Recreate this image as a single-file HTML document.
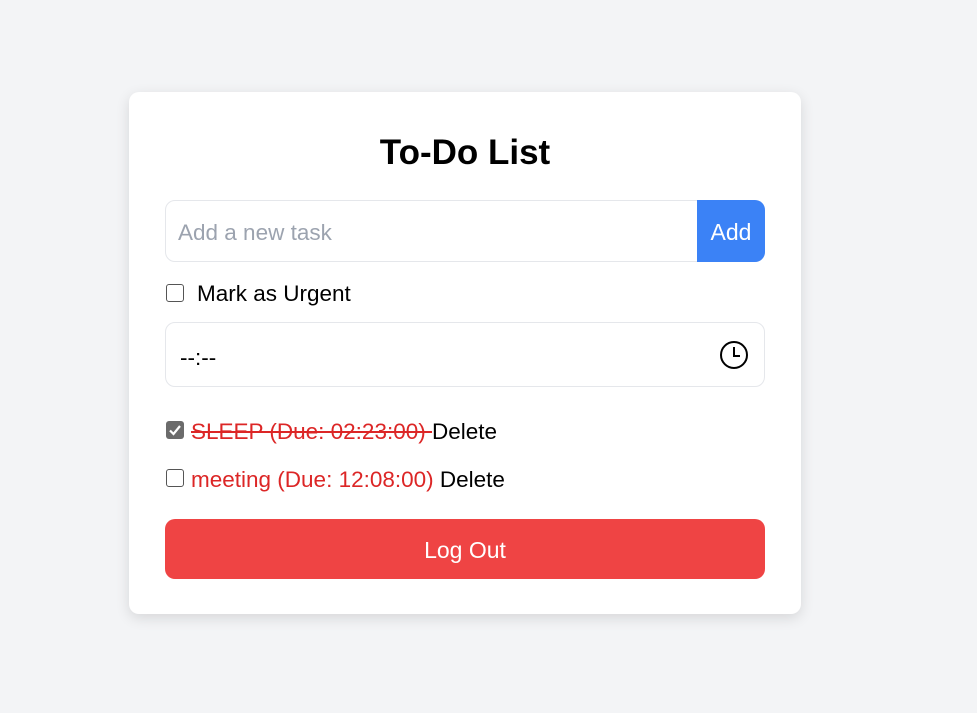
<!DOCTYPE html>
<html><head><style>
body{margin:0;background:#f3f4f6;font-family:"Liberation Sans",sans-serif;width:977px;height:713px;position:relative;overflow:hidden}
.card{position:absolute;left:129px;top:92px;width:672px;height:522px;background:#fff;border-radius:10px;box-shadow:0 4px 14px rgba(0,0,0,0.12)}
.abs{position:absolute}
h1{position:absolute;left:0;width:672px;top:41px;margin:0;text-align:center;font-size:35px;font-weight:bold;color:#000}
.inp{left:36px;top:108px;width:600px;height:62px;border:1px solid #e5e7eb;border-radius:10px;box-sizing:border-box}
.btn{left:568px;top:108px;width:68px;height:62px;background:#3b82f6;color:#fff;border-radius:0 10px 10px 0;font-size:23px;line-height:64px;text-align:center}
.cb{width:18px;height:18px;border:1.5px solid #555;border-radius:3px;box-sizing:border-box}
.txt{font-size:22.5px;color:#000;white-space:nowrap}
</style></head><body>
<div class="card">
<h1>To-Do List</h1>
<div class="abs inp"></div>
<div class="abs txt" style="left:49px;top:128px;color:#9ca3af">Add a new task</div>
<div class="abs btn">Add</div>
<div class="abs cb" style="left:37px;top:192px"></div>
<div class="abs txt" style="left:68px;top:189px">Mark as Urgent</div>
<div class="abs inp" style="top:230px;height:65px"></div>
<div class="abs txt" style="left:51px;top:253px">--:--</div>
<svg class="abs" style="left:590px;top:248px" width="30" height="30" viewBox="0 0 30 30"><circle cx="15" cy="15" r="13" fill="none" stroke="#000" stroke-width="2"/><path d="M15 7v9h6" fill="none" stroke="#000" stroke-width="2"/></svg>
<div class="abs" style="left:37px;top:329px;width:18px;height:18px;background:#6b6b6b;border-radius:3px"><svg width="18" height="18" viewBox="0 0 18 18"><path d="M4 9.5l3.5 3.5L14 5" fill="none" stroke="#fff" stroke-width="2.2"/></svg></div>
<div class="abs txt" style="left:62px;top:327px"><span style="color:#dc2626;text-decoration:line-through">SLEEP (Due: 02:23:00) </span>Delete</div>
<div class="abs cb" style="left:37px;top:377px"></div>
<div class="abs txt" style="left:62px;top:375px"><span style="color:#dc2626">meeting (Due: 12:08:00)</span> Delete</div>
<div class="abs" style="left:36px;top:427px;width:600px;height:60px;background:#ef4444;border-radius:10px;color:#fff;font-size:23px;line-height:62px;text-align:center">Log Out</div>
</div>
</body></html>
